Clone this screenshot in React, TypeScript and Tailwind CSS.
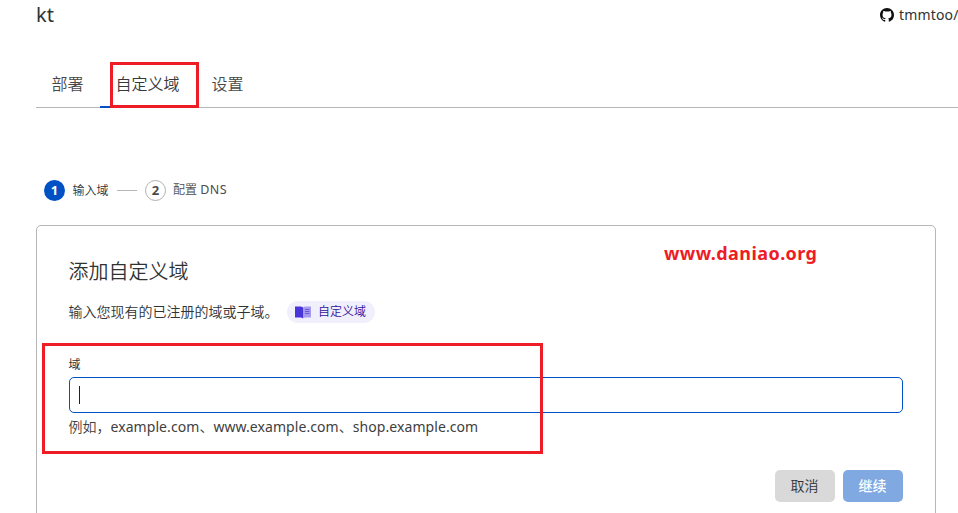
import React from "react";

function GithubMark() {
  return (
    <svg width="14" height="14" viewBox="0 0 16 16" fill="#111" aria-hidden="true">
      <path d="M8 0C3.58 0 0 3.58 0 8c0 3.54 2.29 6.53 5.47 7.59.4.07.55-.17.55-.38 0-.19-.01-.82-.01-1.49-2.01.37-2.53-.49-2.69-.94-.09-.23-.48-.94-.82-1.13-.28-.15-.68-.52-.01-.53.63-.01 1.08.58 1.23.82.72 1.21 1.87.87 2.33.66.07-.52.28-.87.51-1.07-1.78-.2-3.64-.89-3.64-3.95 0-.87.31-1.59.82-2.15-.08-.2-.36-1.02.08-2.12 0 0 .67-.21 2.2.82.64-.18 1.32-.27 2-.27s1.36.09 2 .27c1.53-1.04 2.2-.82 2.2-.82.44 1.1.16 1.92.08 2.12.51.56.82 1.27.82 2.15 0 3.07-1.87 3.75-3.65 3.95.29.25.54.73.54 1.48 0 1.07-.01 1.93-.01 2.2 0 .21.15.46.55.38A8.01 8.01 0 0 0 16 8c0-4.42-3.58-8-8-8z" />
    </svg>
  );
}

function BookIcon() {
  return (
    <svg width="16" height="13" viewBox="0 0 16 13" aria-hidden="true">
      <path d="M0 .5h5.5Q7.3.5 8 1.4V12.6Q7.3 11.5 5.5 11.5H0z" fill="#4a35db" />
      <path d="M8 1.4Q8.7.5 10.5.5H16v11h-5.5Q8.7 11.5 8 12.6z" fill="#a79bee" />
      <path d="M10 3.5H14.5M10 5.5H14.5M10 7.5H14.5" stroke="#6a58e2" strokeWidth="1" />
    </svg>
  );
}

function Tab({ label, active = false }: { label: string; active?: boolean }) {
  return (
    <div
      className={
        "relative h-full pr-[16.5px] pl-[15.5px] pt-[9px] text-[16px] leading-6 " +
        (active ? "text-[#36393a]" : "text-[#484848]")
      }
    >
      {label}
      {active && <span className="absolute inset-x-0 -bottom-px h-[2px] bg-[#0051c3]" />}
      {active && (
        <span className="absolute -top-px left-[10px] h-[46px] w-[89px] border-[3px] border-[#ee1c25]" />
      )}
    </div>
  );
}

export default function App() {
  return (
    <div className="h-[513px] w-[958px] overflow-hidden bg-white font-['Noto_Sans','Noto_Sans_CJK_SC',sans-serif] font-[350] text-[#303334]">
      <header className="flex h-[63px] items-start justify-between pl-9">
        <h1 className="pt-px text-[20px] leading-[28px] font-normal">kt</h1>
        <div className="flex h-[30px] w-[78px] items-center gap-[5px] text-[14px] font-normal whitespace-nowrap">
          <span className="shrink-0"><GithubMark /></span>
          <span className="-mt-[2px] tracking-[0.15px]">tmmtoo/</span>
        </div>
      </header>

      <nav className="ml-9 flex h-[45px] border-b border-[#b6b6b6]">
        <Tab label="部署" />
        <Tab label="自定义域" active />
        <Tab label="设置" />
      </nav>

      <div className="mt-[71px] ml-11 flex h-[22px] items-center text-[12px]">
        <span className="flex size-[21px] items-center justify-center rounded-full bg-[#0051c3] pt-px text-[13px] font-bold text-white">1</span>
        <span className="ml-[7.5px] w-[36.5px] pt-px">输入域</span>
        <span className="ml-2 h-px w-5 bg-[#b6b6b6]" />
        <span className="ml-2 flex size-[21px] items-center justify-center rounded-full border border-[#b0b0b0] pt-px text-[13px] font-bold text-[#4a4a4a]">2</span>
        <span className="ml-[7px] pt-px text-[#4d4d4d]">配置 <span className="text-[12.5px] font-normal tracking-[0.5px]">DNS</span></span>
      </div>

      <main className="relative mt-[24px] ml-9 h-[320px] w-[900px] rounded-[5px] border border-[#b6b6b6] px-8 pt-[32px]">
        <span className="absolute top-[15px] left-[627px] text-[18px] leading-6 font-bold tracking-[0.43px] text-[#ee1c25]">www.daniao.org</span>
        <h2 className="-ml-[0.5px] text-[20px] leading-[28px]">添加自定义域</h2>
        <div className="mt-[15px] flex h-[22px] items-center text-[14px]">
          <span className="-ml-[0.5px] w-[218.5px] pb-[2px] whitespace-nowrap">输入您现有的已注册的域或子域。</span>
          <span className="flex h-[22px] w-[88px] items-center gap-[7px] rounded-full bg-[#f2effd] pl-2 text-[12px] text-[#31149c]">
            <BookIcon />
            自定义域
          </span>
        </div>
        <label className="mt-[33px] -ml-[0.5px] block h-[21px] text-[12px] leading-[18px] font-normal">域</label>
        <div className="flex h-9 items-center rounded-[5px] border border-[#0051c3] bg-white pl-[9px]">
          <span className="h-[18px] w-px bg-[#222]" />
        </div>
        <p className="mt-[4px] -ml-[0.5px] text-[14px] leading-5 text-[#404040]">
          例如，<span className="font-normal tracking-[0.07px]">example.com</span>、<span className="font-normal tracking-[0.07px]">www.example.com</span>、<span className="font-normal tracking-[0.07px]">shop.example.com</span>
        </p>
        <div className="mt-[33px] flex justify-end gap-2 text-[14px]">
          <button className="h-8 w-[60px] rounded-[5px] bg-[#d9d9d9] pr-px pb-[2px]">取消</button>
          <button className="h-8 w-[60px] rounded-[5px] bg-[#80a8e1] pr-px pb-[2px] font-medium text-white">继续</button>
        </div>
        <span className="absolute top-[117px] left-[5px] h-[111px] w-[501px] border-[3px] border-[#ee1c25]" />
      </main>
    </div>
  );
}
